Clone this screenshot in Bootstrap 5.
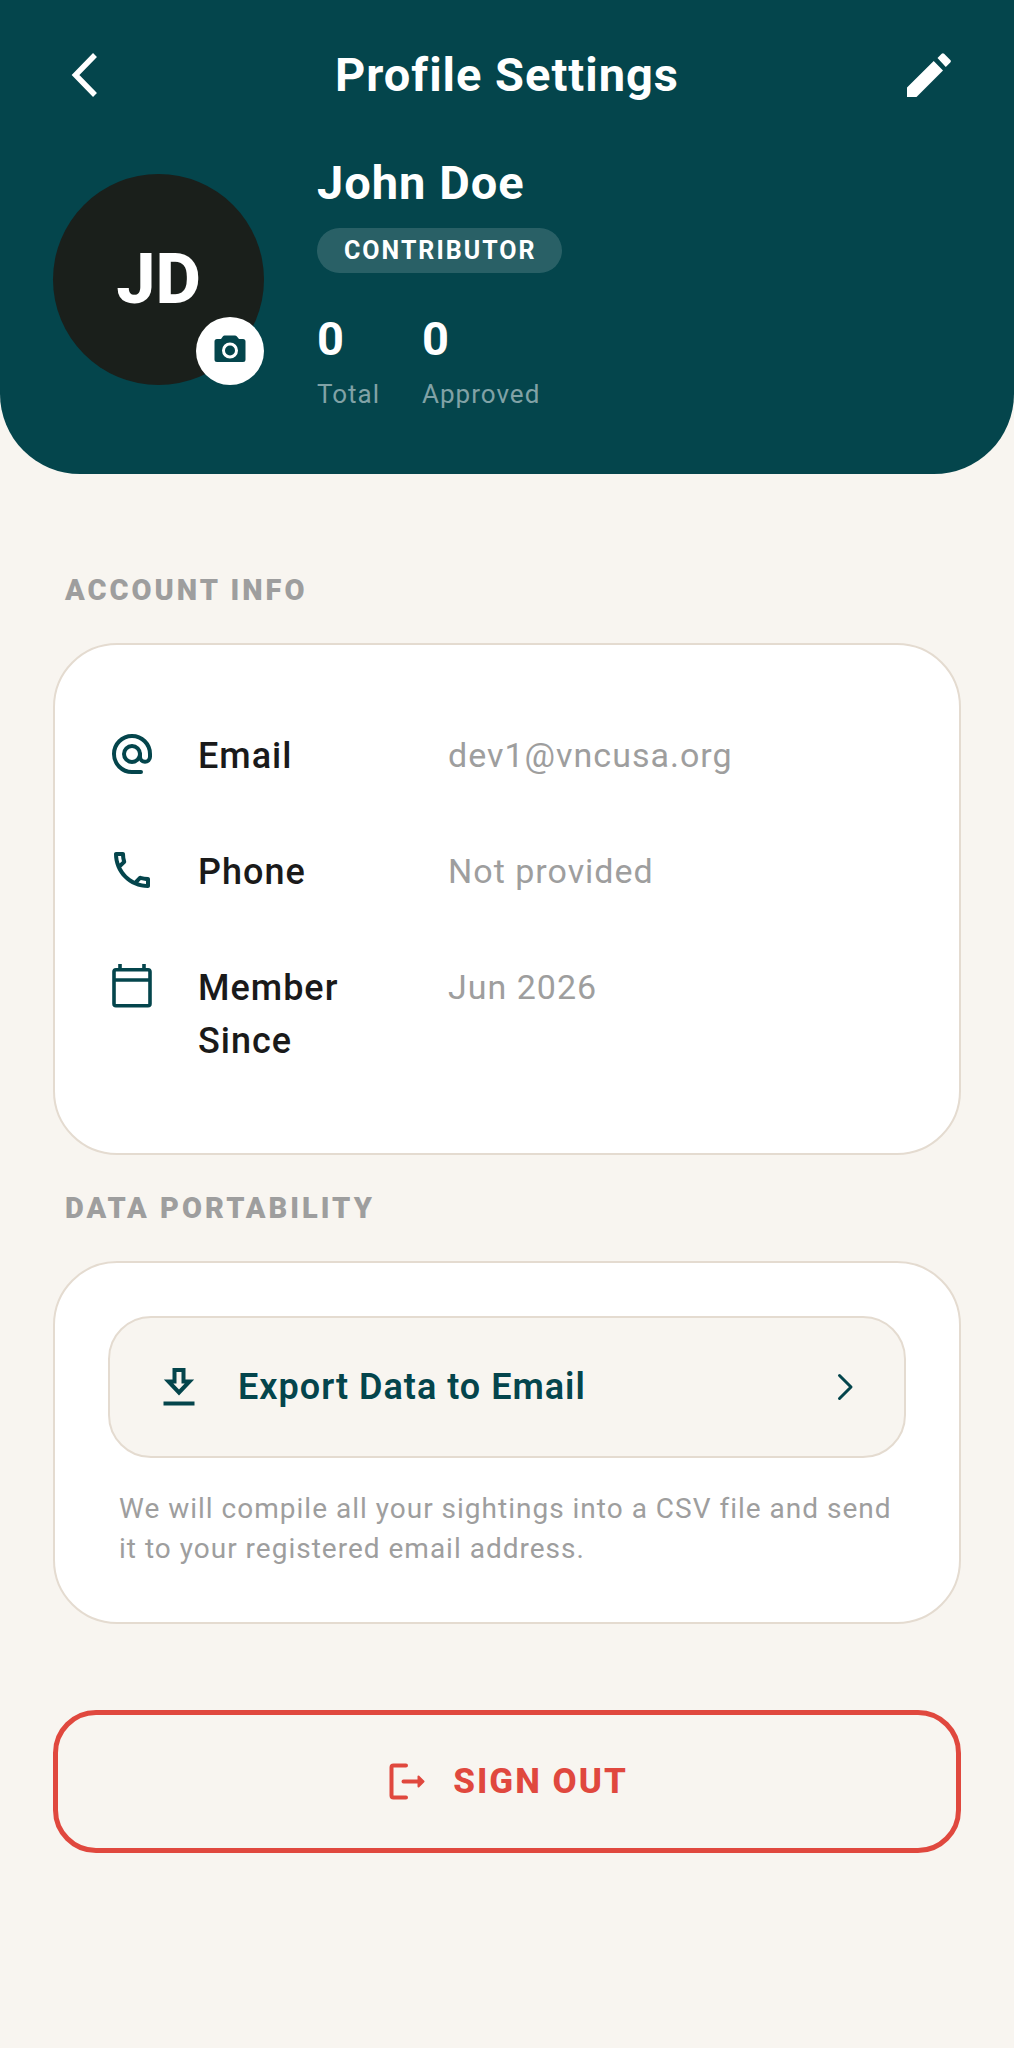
<!DOCTYPE html>
<html lang="en">
<head>
<meta charset="utf-8">
<meta name="viewport" content="width=device-width, initial-scale=1">
<title>Profile Settings</title>
<link href="https://cdn.jsdelivr.net/npm/bootstrap@5.3.0/dist/css/bootstrap.min.css" rel="stylesheet">
<style>
  :root { --teal: #04454c; --sand: #f8f5f0; --line: #e4dbd0; --muted: #9e9e9e; --danger: #e0483e; }
  body { font-family: Roboto, "Liberation Sans", sans-serif; background: var(--sand); color: #1a1a1a; letter-spacing: 1px; }
  svg { display: block; flex: none; }
  .gutter { padding-left: 53px; padding-right: 53px; }
  .hero { background: var(--teal); border-radius: 0 0 80px 80px; padding-top: 43px; padding-bottom: 64px; }
  .icon-btn { width: 64px; height: 64px; color: #fff; background: none; border: 0; padding: 0; }
  .page-title, .user-name, .stat-num { font-size: 47px; line-height: 56px; font-weight: 700; }
  .profile-row { gap: 53px; margin-top: 48px; }
  .avatar { width: 211px; height: 211px; background: #1a1f1b; font-size: 70px; line-height: 80px; font-weight: 800; letter-spacing: 0; margin-top: 19px; padding-bottom: 2px; }
  .camera-btn { width: 68px; height: 68px; background: #fff; color: var(--teal); border: 0; padding: 0; }
  .role-pill { background: rgba(255,255,255,.15); font-size: 25px; line-height: 29px; font-weight: 700; letter-spacing: 2px; padding: 8px 25px 8px 27px; margin-top: 17px; }
  .stats { gap: 42px; margin-top: 38px; }
  .stat-label { font-size: 26px; line-height: 32px; color: #81a2a6; margin-top: 11px; }
  .content { padding-top: 98px; }
  .section-title { font-size: 29px; line-height: 36px; font-weight: 900; letter-spacing: 3px; color: var(--muted); padding-left: 12px; margin: 0; }
  .panel { background: #fff; border: 2px solid var(--line); border-radius: 64px; padding: 53px; margin-top: 35px; margin-bottom: 35px; }
  .account { gap: 63px; padding: 85px 53px; }
  .field-icon { width: 48px; height: 48px; color: var(--teal); }
  .field-name { width: 196px; font-size: 36px; line-height: 53px; font-weight: 500; margin-left: 42px; margin-right: 54px; }
  .field-value { font-size: 34px; line-height: 50px; color: var(--muted); }
  .export-btn { background: var(--sand); border: 2px solid var(--line); border-radius: 43px; color: var(--teal); font-size: 36px; line-height: 43px; font-weight: 600; padding: 47px; letter-spacing: 1px; gap: 37px; }
  .hint { font-size: 28px; line-height: 40px; color: var(--muted); padding-left: 11px; margin-top: 31px; }
  .signout-btn { border: 5px solid var(--danger); border-radius: 43px; color: var(--danger); background: none; font-size: 35px; line-height: 43px; font-weight: 800; letter-spacing: 2px; padding: 45px; gap: 24px; margin-top: 86px; }
</style>
</head>
<body>
<header class="hero gutter text-white">
  <div class="d-flex align-items-center justify-content-between">
    <button type="button" class="icon-btn d-flex align-items-center justify-content-center" aria-label="Back">
      <svg width="44" height="44" viewBox="0 0 44 44" fill="none" stroke="currentColor" stroke-width="5.500"><path d="M32 2 12.500 22 32 42"/></svg>
    </button>
    <h1 class="page-title m-0">Profile Settings</h1>
    <button type="button" class="icon-btn d-flex align-items-center justify-content-center" aria-label="Edit profile">
      <svg width="44" height="44" viewBox="0 0 44 44" fill="currentColor"><path d="M0 44V34.500L26.700 8 36 17.500 9.500 44ZM30.500 5l4.200-4.200q1.200-1.200 2.400 0L43.300 7q1.200 1.200 0 2.400L38.800 14Z"/></svg>
    </button>
  </div>
  <div class="profile-row d-flex align-items-start">
    <div class="avatar position-relative rounded-circle d-flex align-items-center justify-content-center flex-shrink-0">
      JD
      <button type="button" class="camera-btn position-absolute bottom-0 end-0 rounded-circle d-flex align-items-center justify-content-center" aria-label="Change photo">
        <svg width="36" height="36" viewBox="0 0 36 36" fill="currentColor"><path fill-rule="evenodd" d="M12.500 2.500H23q1 0 1.700.8L27 6h4q2.500 0 2.500 2.500v18q0 2.500-2.500 2.500H5q-2.500 0-2.500-2.500v-18Q2.500 6 5 6h4l2-2.700q.6-.8 1.500-.8ZM18 9.500a8 8 0 1 0 0 16 8 8 0 0 0 0-16Z"/><circle cx="18" cy="17.500" r="5"/></svg>
      </button>
    </div>
    <div>
      <h2 class="user-name m-0">John Doe</h2>
      <span class="role-pill d-inline-block rounded-pill">CONTRIBUTOR</span>
      <div class="stats d-flex">
        <div><div class="stat-num">0</div><div class="stat-label">Total</div></div>
        <div><div class="stat-num">0</div><div class="stat-label">Approved</div></div>
      </div>
    </div>
  </div>
</header>

<main class="content gutter">
  <section>
    <h2 class="section-title">ACCOUNT INFO</h2>
    <div class="panel account d-flex flex-column">
      <div class="d-flex align-items-start">
        <svg class="field-icon" viewBox="0 0 24 24" fill="none" stroke="currentColor" stroke-width="2" stroke-linecap="round" aria-hidden="true"><circle cx="12" cy="12" r="4"/><path d="M16.500 21H12a9 9 0 1 1 9-9v1.400a2.500 2.500 0 0 1-5 0V12"/></svg>
        <div class="field-name">Email</div>
        <div class="field-value">dev1@vncusa.org</div>
      </div>
      <div class="d-flex align-items-start">
        <svg class="field-icon" viewBox="0 0 24 24" fill="currentColor" aria-hidden="true"><path d="M6.540 5c.06.89.21 1.760.45 2.590l-1.200 1.200c-.41-1.200-.67-2.470-.76-3.790h1.510m9.860 12.020c.85.24 1.720.39 2.600.45v1.490c-1.320-.09-2.590-.35-3.800-.75l1.200-1.190M7.500 3H4c-.55 0-1 .45-1 1 0 9.390 7.610 17 17 17 .55 0 1-.45 1-1v-3.490c0-.55-.45-1-1-1-1.240 0-2.450-.2-3.570-.57-.1-.04-.21-.05-.31-.05-.26 0-.51.1-.71.29l-2.200 2.200c-2.830-1.450-5.150-3.760-6.590-6.590l2.200-2.200c.28-.28.36-.67.25-1.020C8.700 6.450 8.500 5.250 8.500 4c0-.55-.45-1-1-1z"/></svg>
        <div class="field-name">Phone</div>
        <div class="field-value">Not provided</div>
      </div>
      <div class="d-flex align-items-start">
        <svg class="field-icon" viewBox="0 0 24 24" fill="none" stroke="currentColor" stroke-width="1.800" aria-hidden="true"><rect x="3" y="3.900" width="18" height="18" rx="1"/><path d="M3 9h18M6 1v3M18 1v3"/></svg>
        <div class="field-name">Member Since</div>
        <div class="field-value">Jun 2026</div>
      </div>
    </div>
  </section>

  <section>
    <h2 class="section-title">DATA PORTABILITY</h2>
    <div class="panel">
      <button type="button" class="export-btn w-100 d-flex align-items-center text-start">
        <svg width="44" height="44" viewBox="0 0 44 44" fill="none" stroke="currentColor" stroke-width="4" aria-hidden="true"><path d="M17.500 5h9v11.500h6L22 27.500 11.500 16.500h6Z"/><path d="M6.500 38.500h31"/></svg>
        <span class="flex-grow-1">Export Data to Email</span>
        <svg width="24" height="32" viewBox="0 0 24 32" fill="none" stroke="currentColor" stroke-width="3" stroke-linecap="round" stroke-linejoin="round" aria-hidden="true"><path d="M6.500 4.500 18 16 6.500 27.500"/></svg>
      </button>
      <p class="hint mb-0">We will compile all your sightings into a CSV file and send it to your registered email address.</p>
    </div>
  </section>

  <button type="button" class="signout-btn w-100 d-flex align-items-center justify-content-center">
    <svg width="43" height="43" viewBox="0 0 43 43" fill="none" stroke="currentColor" stroke-width="4" stroke-linecap="round" stroke-linejoin="round" aria-hidden="true"><path d="M20 5.500H7.500q-2 0-2 2v28q0 2 2 2H20M17.500 21.500H33"/><path d="M32.500 16.500v10l5-5Z" fill="currentColor" stroke-width="2"/></svg>
    <span>SIGN OUT</span>
  </button>
</main>
<script src="https://cdn.jsdelivr.net/npm/bootstrap@5.3.0/dist/js/bootstrap.bundle.min.js"></script>
</body>
</html>
